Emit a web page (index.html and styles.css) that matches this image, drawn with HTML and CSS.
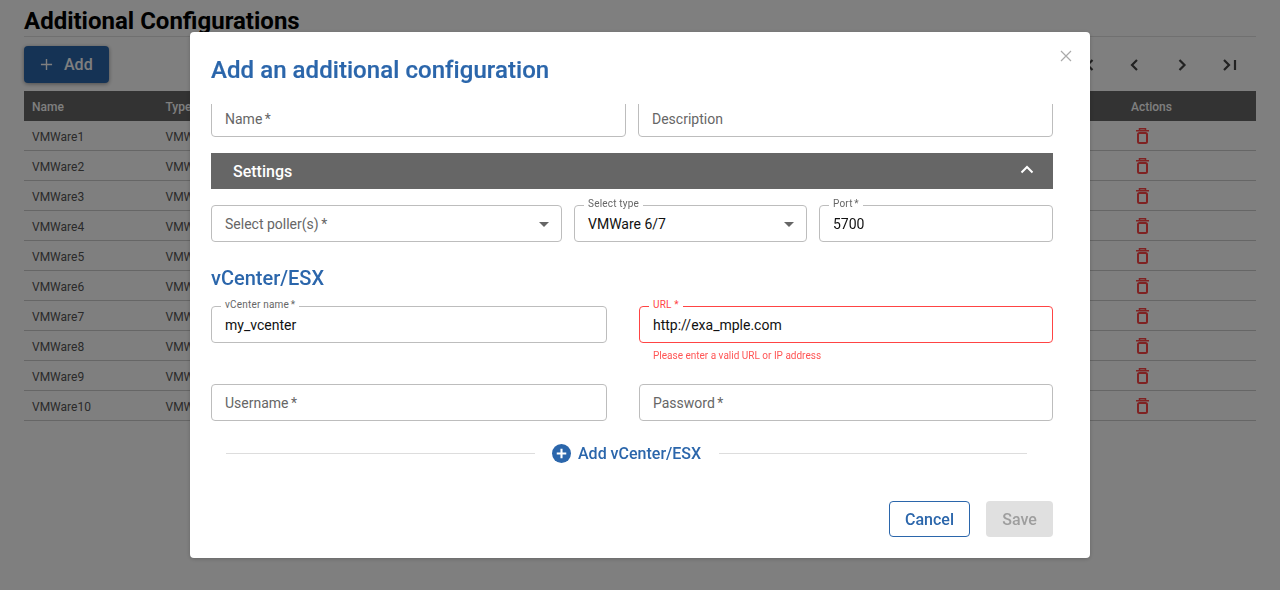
FILE: index.html
```html
<!DOCTYPE html>
<html lang="en">
<head>
<meta charset="utf-8">
<title>Additional Configurations</title>
<link rel="stylesheet" href="styles.css">
</head>
<body>
<svg class="sprite" width="0" height="0" aria-hidden="true">
  <symbol id="trash" viewBox="0 0 13 16"><path d="M0 2.700h13M3.500 2.500V.8h6v1.700" fill="none" stroke="currentColor" stroke-width="1.500"/><rect x="2" y="5" width="9" height="10" rx="1.500" fill="none" stroke="currentColor" stroke-width="2"/></symbol>
</svg>
<main class="page">
  <h1 class="page-title">Additional Configurations</h1>
  <div class="toolbar">
    <button class="add-btn" type="button">
      <svg class="add-plus" viewBox="0 0 14 14"><path d="M7 1v12M1 7h12" stroke="currentColor" stroke-width="1.5" fill="none"/></svg>
      Add
    </button>
    <nav class="pager">
      <svg viewBox="0 0 24 24"><path d="M18.500 7l-5 5 5 5M9 7v10" fill="none" stroke="currentColor" stroke-width="2.200"/></svg>
      <svg viewBox="0 0 24 24"><path d="M15 7l-5 5 5 5" fill="none" stroke="currentColor" stroke-width="2.200"/></svg>
      <svg viewBox="0 0 24 24"><path d="M9.500 7l5 5-5 5" fill="none" stroke="currentColor" stroke-width="2.200"/></svg>
      <svg viewBox="0 0 24 24"><path d="M6 7l5 5-5 5" fill="none" stroke="currentColor" stroke-width="2.200"/><path d="M17 7v10" fill="none" stroke="currentColor" stroke-width="2.200"/></svg>
    </nav>
  </div>
  <div class="table">
    <div class="row head"><span>Name</span><span>Type</span><span>Actions</span></div>
    <div class="row"><span>VMWare1</span><span>VMWare 6/7</span><svg class="trash"><use href="#trash"/></svg></div>
    <div class="row"><span>VMWare2</span><span>VMWare 6/7</span><svg class="trash"><use href="#trash"/></svg></div>
    <div class="row"><span>VMWare3</span><span>VMWare 6/7</span><svg class="trash"><use href="#trash"/></svg></div>
    <div class="row"><span>VMWare4</span><span>VMWare 6/7</span><svg class="trash"><use href="#trash"/></svg></div>
    <div class="row"><span>VMWare5</span><span>VMWare 6/7</span><svg class="trash"><use href="#trash"/></svg></div>
    <div class="row"><span>VMWare6</span><span>VMWare 6/7</span><svg class="trash"><use href="#trash"/></svg></div>
    <div class="row"><span>VMWare7</span><span>VMWare 6/7</span><svg class="trash"><use href="#trash"/></svg></div>
    <div class="row"><span>VMWare8</span><span>VMWare 6/7</span><svg class="trash"><use href="#trash"/></svg></div>
    <div class="row"><span>VMWare9</span><span>VMWare 6/7</span><svg class="trash"><use href="#trash"/></svg></div>
    <div class="row"><span>VMWare10</span><span>VMWare 6/7</span><svg class="trash"><use href="#trash"/></svg></div>
  </div>
</main>
<div class="backdrop"></div>
<section class="modal">
  <svg class="close" viewBox="0 0 12 12"><path d="M1 1l10 10M11 1L1 11" stroke="currentColor" stroke-width="1.2" fill="none"/></svg>
  <h2 class="modal-title">Add an additional configuration</h2>
  <div class="modal-body">
    <div class="form">
      <div class="cols first">
        <div class="field"><span class="placeholder">Name <span class="req">*</span></span></div>
        <div class="field"><span class="placeholder">Description</span></div>
      </div>
      <div class="settings-bar"><span>Settings</span>
        <svg viewBox="0 0 14 9"><path d="M1.500 7.500L7 2l5.500 5.500" fill="none" stroke="currentColor" stroke-width="2"/></svg>
      </div>
      <div class="cols settings-row">
        <div class="field poller"><span class="placeholder">Select poller(s) <span class="req">*</span></span><i class="caret"></i></div>
        <div class="field type"><label class="float">Select type</label><span class="value">VMWare 6/7</span><i class="caret"></i></div>
        <div class="field port"><label class="float">Port <span class="req">*</span></label><span class="value">5700</span></div>
      </div>
      <h3 class="section-title">vCenter/ESX</h3>
      <div class="vc-grid">
        <div class="field"><label class="float">vCenter name <span class="req">*</span></label><span class="value">my_vcenter</span></div>
        <div class="field-wrap">
          <div class="field invalid"><label class="float">URL *</label><span class="value">http://exa_mple.com</span></div>
          <p class="error">Please enter a valid URL or IP address</p>
        </div>
      </div>
      <div class="vc-grid creds">
        <div class="field"><span class="placeholder">Username <span class="req">*</span></span></div>
        <div class="field"><span class="placeholder">Password <span class="req">*</span></span></div>
      </div>
      <div class="add-row">
        <span class="rule lead"></span>
        <button class="add-link" type="button">
          <svg viewBox="0 0 20 20"><circle cx="10" cy="10" r="10" fill="currentColor"/><path d="M10 5v10M5 10h10" stroke="#fff" stroke-width="2.200"/></svg>
          Add vCenter/ESX
        </button>
        <span class="rule"></span>
      </div>
    </div>
  </div>
  <footer class="modal-foot">
    <button class="btn cancel" type="button">Cancel</button>
    <button class="btn save" type="button" disabled>Save</button>
  </footer>
</section>
</body>
</html>
```
FILE: styles.css
```css
* { box-sizing: border-box; }
html, body { margin: 0; height: 590px; overflow: hidden; }
body { font-family: Roboto, "Liberation Sans", sans-serif; background: #fff; color: #000; }
.sprite { display: block; }
button { font-family: inherit; }

.page { padding: 0 24px; }
.page-title { margin: 0; height: 37px; padding-top: 6px; font-size: 24px; line-height: 30px; font-weight: 700; color: #000; border-bottom: 1px solid #e0e0e0; }
.toolbar { display: flex; justify-content: space-between; align-items: center; margin-top: 9px; height: 37px; }
.add-btn { display: flex; align-items: center; gap: 11px; width: 85px; height: 37px; padding: 0 0 0 16px; border: 0; border-radius: 4px; background: #2b66ab; color: #fff; font-size: 16px; font-weight: 500; box-shadow: 0 1px 4px rgba(0,0,0,.4); }
.add-plus { width: 13px; height: 13px; }
.pager { display: flex; gap: 24px; margin-right: 14px; color: #444; }
.pager svg { width: 24px; height: 24px; display: block; }
.table { margin-top: 8px; }
.row { display: grid; grid-template-columns: 133.5px 1fr 125px; align-items: center; height: 30px; padding: 2px 0 0 8px; font-size: 12px; color: #555; border-bottom: 1px solid #ccc; }
.row.head { background: #666; color: #fff; font-weight: 500; border-bottom: 0; }
.trash { width: 13px; height: 16px; margin: -2px 0 0 5px; color: #f44; }

.backdrop { position: fixed; inset: 0; background: rgba(0,0,0,.5); }
.modal { position: fixed; left: 190px; top: 32px; width: 900px; height: 526px; background: #fff; border-radius: 4px; box-shadow: 0 1px 4px rgba(0,0,0,.2); display: flex; flex-direction: column; padding: 0 37px 21px 21px; }
.close { position: absolute; right: 18px; top: 18px; width: 12px; height: 12px; color: #aaa; }
.modal-title { margin: 0; height: 72px; padding-top: 23px; font-size: 24px; line-height: 30px; font-weight: 500; letter-spacing: .055px; color: #2b66ab; -webkit-text-stroke: .2px #2b66ab; }
.modal-body { flex: 1; overflow: hidden; min-height: 0; }
.form { margin-top: -4px; }

.cols { display: flex; gap: 12px; }
.cols > .field { flex: 1; }
.field { position: relative; display: flex; align-items: center; height: 37px; padding: 0 13px; border: 1px solid #bdbdbd; border-radius: 4px; background: #fff; font-size: 14px; }
.placeholder { color: #666; }
.req { margin-left: -1px; }
.value { color: #111; }
.float { position: absolute; left: 9px; top: -8px; padding: 0 4px; background: #fff; color: #666; font-size: 10px; line-height: 12px; letter-spacing: .2px; }
.caret { position: absolute; right: 12px; top: 16px; width: 0; height: 0; border-left: 5px solid transparent; border-right: 5px solid transparent; border-top: 5px solid #666; }

.settings-bar { display: flex; align-items: center; justify-content: space-between; height: 36px; margin-top: 16px; padding: 0 19px 0 22px; background: #666; color: #fff; font-size: 16px; font-weight: 500; }
.settings-bar svg { width: 14px; height: 9px; margin-bottom: 3px; }
.settings-row { margin-top: 16px; }
.cols > .poller { flex: 0 0 351px; }
.cols > .type { flex: 0 0 233px; }
.cols > .port { flex: 0 0 234px; }

.section-title { margin: 24px 0 16px; font-size: 20px; line-height: 24px; font-weight: 500; color: #2b66ab; }
.vc-grid { display: grid; grid-template-columns: 396px 414px; column-gap: 32px; height: 78px; align-items: start; }
.vc-grid.creds { height: 37px; }
.field.invalid { border-color: #f44; }
.field.invalid .float { color: #f44; }
.error { margin: 7px 0 0 14px; font-size: 10px; line-height: 12px; color: #f55; }

.add-row { display: flex; align-items: center; margin-top: 16px; padding: 0 26px 0 15px; height: 33px; }
.rule { flex: 1; height: 1px; background: #ddd; }
.rule.lead { flex: 0 0 309px; }
.add-link { display: flex; align-items: center; gap: 7px; padding: 0; margin: 0 18px 0 17px; border: 0; background: none; color: #2b66ab; font-size: 16px; font-weight: 500; }
.add-link svg { width: 19px; height: 19px; }

.modal-foot { display: flex; justify-content: flex-end; gap: 16px; }
.btn { height: 36px; border-radius: 4px; font-size: 16px; font-weight: 500; padding: 0; }
.cancel { width: 81px; border: 1px solid #2b66ab; background: #fff; color: #2b66ab; }
.save { width: 67px; border: 0; background: #e0e0e0; color: #9e9e9e; }
```
